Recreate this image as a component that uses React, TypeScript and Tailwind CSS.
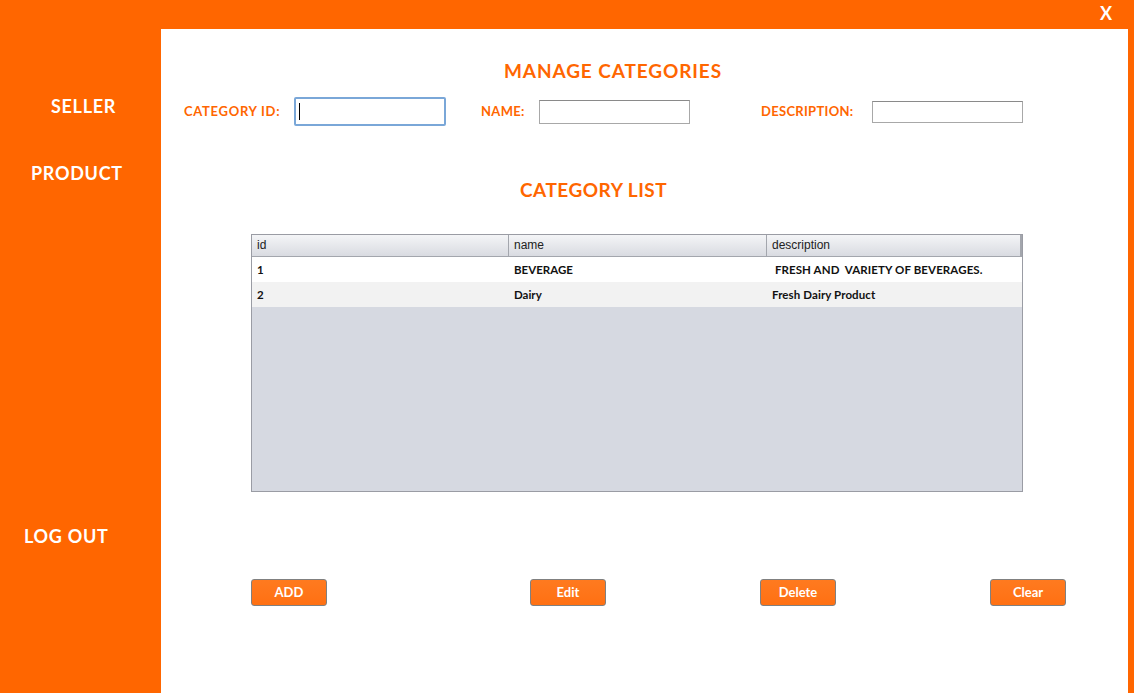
const rows = [
  { id: '1', name: 'BEVERAGE', description: ' FRESH AND  VARIETY OF BEVERAGES.' },
  { id: '2', name: 'Dairy', description: 'Fresh Dairy Product' },
]

const font = { fontFamily: 'Lato, "Open Sans", sans-serif' }

function SideLink({ label, className }: { label: string; className: string }) {
  return (
    <div className={`text-[18px] font-bold leading-[24px] text-white tracking-[0.7px] ${className}`}>
      {label}
    </div>
  )
}

function ActionButton({ label, className = '' }: { label: string; className?: string }) {
  return (
    <button
      className={`h-[27px] w-[76px] shrink-0 rounded-[3px] border border-[#808080] bg-gradient-to-b from-[#ff7a1f] to-[#ff7012] text-[13px] font-bold text-white ${className}`}
    >
      {label}
    </button>
  )
}

export default function App() {
  return (
    <div className="flex h-[693px] w-[1134px] flex-col bg-[#ff6600]" style={font}>
      <div className="flex h-[29px] items-start justify-end pr-[22px] pt-[2px]">
        <span className="text-[18px] font-bold leading-[22px] text-white">X</span>
      </div>

      <div className="flex flex-1">
        <aside className="w-[161px] shrink-0">
          <SideLink label="SELLER" className="mt-[65px] pl-[51px]" />
          <SideLink label="PRODUCT" className="mt-[43px] pl-[31px]" />
          <SideLink label="LOG OUT" className="mt-[339px] pl-[24px]" />
        </aside>

        <main className="w-[967px] bg-white">
          <h1 className="ml-[343px] mt-[31px] text-[19px] font-bold leading-[22px] tracking-[0.9px] text-[#ff6600]">
            MANAGE CATEGORIES
          </h1>

          <div className="mt-[15px] flex h-[29px] items-center text-[13px] font-bold text-[#ff6600]">
            <label className="ml-[23px] w-[110px] tracking-[0.7px]">CATEGORY ID:</label>
            <div className="flex h-[29px] w-[152px] items-center rounded-[2px] border-2 border-[#7aa7d8] bg-white pl-[3px]">
              <span className="h-[17px] w-px bg-black" />
            </div>
            <label className="ml-[35px] w-[58px] tracking-[0.3px]">NAME:</label>
            <div className="h-[24px] w-[151px] border border-[#a8a8a8] border-t-[#8a8a8a] bg-white" />
            <label className="ml-[71px] w-[111px] tracking-[0.3px]">DESCRIPTION:</label>
            <div className="h-[22px] w-[151px] border border-[#a8a8a8] border-t-[#8a8a8a] bg-white" />
          </div>

          <h2 className="ml-[359px] mt-[53px] text-[19px] font-bold leading-[22px] tracking-[0.5px] text-[#ff6600]">
            CATEGORY LIST
          </h2>

          <div className="ml-[90px] mt-[33px] flex h-[258px] w-[772px] flex-col border border-[#9a9ca4] bg-[#d6d9e1]">
            <div
              className="grid h-[22px] shrink-0 grid-cols-[257px_258px_1fr] border-b border-[#a3a6ad] bg-gradient-to-b from-[#f4f5f7] to-[#d9dbe1] text-[12px] leading-[21px] text-[#222]"
              style={{ fontFamily: '"Liberation Sans", Arial, sans-serif' }}
            >
              <div className="border-r border-[#a3a6ad] pl-[5px]">id</div>
              <div className="border-r border-[#a3a6ad] pl-[5px]">name</div>
              <div className="border-r-2 border-[#a3a6ad] pl-[5px]">description</div>
            </div>
            {rows.map((r, i) => (
              <div
                key={r.id}
                className={`grid h-[25px] grid-cols-[257px_258px_1fr] items-center text-[11.5px] font-bold text-[#111] ${
                  i % 2 === 0 ? 'bg-white' : 'bg-[#f2f2f2]'
                }`}
              >
                <div className="pl-[5px]">{r.id}</div>
                <div className="pl-[5px]">{r.name}</div>
                <div className="whitespace-pre pl-[5px] tracking-[0.1px]">{r.description}</div>
              </div>
            ))}
          </div>

          <div className="ml-[90px] mt-[87px] flex">
            <ActionButton label="ADD" />
            <ActionButton label="Edit" className="ml-[203px]" />
            <ActionButton label="Delete" className="ml-[154px]" />
            <ActionButton label="Clear" className="ml-[154px]" />
          </div>
        </main>
      </div>
    </div>
  )
}
